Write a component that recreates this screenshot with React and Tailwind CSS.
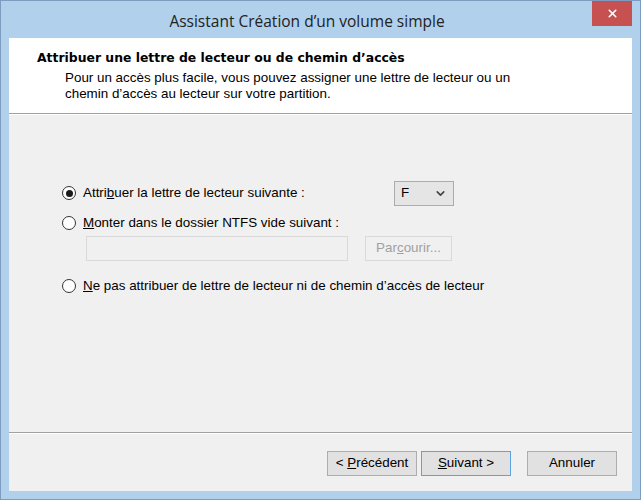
import { ChevronDown, X } from 'lucide-react'

const font = { fontFamily: '"Liberation Sans", Arial, sans-serif' }

function Radio({ checked, children }) {
  return (
    <label className="flex items-center h-[20px] gap-[7px] text-[13.4px] text-black">
      <span className="flex items-center justify-center w-[14px] h-[14px] rounded-full border border-[#333333] bg-white">
        {checked && <span className="w-[7px] h-[7px] rounded-full bg-[#1a1a1a]" />}
      </span>
      <span>{children}</span>
    </label>
  )
}

function Button({ children, primary }) {
  return (
    <button
      className={`h-[25px] w-[90px] text-[13.4px] text-black bg-[#e1e1e1] border ${
        primary ? 'border-[#5ea2e6]' : 'border-[#adadad]'
      }`}
    >
      {children}
    </button>
  )
}

export default function App() {
  return (
    <div
      className="w-[641px] h-[500px] bg-[#b0d0ec] border border-[#7d9cbf] px-[8px] pb-[8px] flex flex-col"
      style={font}
    >
      {/* Title bar */}
      <div className="h-[37px] flex items-start shrink-0">
        <div
          className="flex-1 text-center pl-[13px] pt-[10px] text-[15.5px] leading-[20px] text-[#222222]"
          style={{ fontFamily: '"Open Sans", "Noto Sans", sans-serif' }}
        >
          Assistant Création d’un volume simple
        </div>
        <div className="w-[40px] h-[25px] bg-[#c75050] flex items-center justify-center text-white">
          <X size={13} strokeWidth={3} />
        </div>
      </div>

      {/* Client area */}
      <div className="flex-1 flex flex-col bg-[#f0f0f0]">
        {/* Header */}
        <div className="h-[75px] bg-white pt-[12px] shrink-0">
          <p
            className="pl-[28px] text-[12.4px] leading-[16px] font-bold text-black"
            style={{ fontFamily: '"DejaVu Sans", sans-serif' }}
          >
            Attribuer une lettre de lecteur ou de chemin d’accès
          </p>
          <p className="pl-[56px] pt-[4px] text-[13.4px] leading-[16px] text-black">
            Pour un accès plus facile, vous pouvez assigner une lettre de lecteur ou un
            <br />
            chemin d’accès au lecteur sur votre partition.
          </p>
        </div>
        <div className="h-px bg-[#a0a0a0]" />
        <div className="h-px bg-white" />

        {/* Body */}
        <div className="h-[317px] pt-[68px] pl-[53px] flex flex-col">
          <div className="flex items-center h-[20px]">
            <div className="w-[332px]">
              <Radio checked>
                Attri<u>b</u>uer la lettre de lecteur suivante :
              </Radio>
            </div>
            <div className="w-[60px] h-[25px] border border-[#acacac] bg-[#e5e5e5] flex items-center justify-between pl-[6px] pr-[6px] text-[13.4px] text-black">
              <span>F</span>
              <ChevronDown size={13} strokeWidth={3} className="text-[#444444]" />
            </div>
          </div>
          <div className="mt-[10px]">
            <Radio>
              <u>M</u>onter dans le dossier NTFS vide suivant :
            </Radio>
          </div>
          <div className="mt-[3px] pl-[24px] flex items-center gap-[17px]">
            <div className="w-[262px] h-[25px] border border-[#d9d9d9] bg-[#f0f0f0]" />
            <button className="h-[25px] w-[87px] text-[13.4px] border border-[#d9d9d9] bg-[#f0f0f0] text-[#a0a0a0]">
              Par<u>c</u>ourir...
            </button>
          </div>
          <div className="mt-[15px]">
            <Radio>
              <u>N</u>e pas attribuer de lettre de lecteur ni de chemin d’accès de lecteur
            </Radio>
          </div>
        </div>

        <div className="h-px bg-[#a0a0a0]" />
        <div className="h-px bg-white" />

        {/* Footer */}
        <div className="flex-1 flex items-start justify-end pt-[17px] pr-[15px]">
          <Button>
            &lt; <u>P</u>récédent
          </Button>
          <div className="w-[4px]" />
          <Button primary>
            <u>S</u>uivant &gt;
          </Button>
          <div className="w-[16px]" />
          <Button>Annuler</Button>
        </div>
      </div>
    </div>
  )
}
